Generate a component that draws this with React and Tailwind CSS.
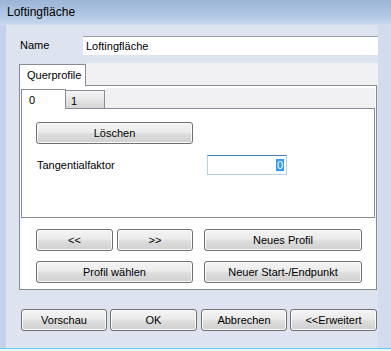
import React from 'react';

const btn =
  'flex items-center justify-center h-[22px] rounded-[3px] border border-[#707070] bg-[linear-gradient(to_bottom,#f4f4f4_0%,#ebebeb_45%,#dddddd_55%,#d0d0d0_100%)] shadow-[inset_0_0_0_1px_#fbfbfb] text-[11px] text-black';

function Btn({ w, className = '', children }) {
  return <div className={`${btn} ${w} ${className}`}>{children}</div>;
}

export default function App() {
  return (
    <div className="w-[391px] h-[351px] bg-[#eef4fa] overflow-hidden font-['Liberation_Sans',Arial,sans-serif] text-black">
      {/* title bar */}
      <div className="h-[25px] flex items-center pl-[7px] text-[12px] bg-[linear-gradient(to_bottom,#9cb4d6,#b4cae6_70%,#c4d7ee)] border-b border-[#cfdcef]">
        Loftingfläche
      </div>

      <div className="flex h-[323px]">
        <div className="w-[6px] bg-[#c4d2ea]" />
        <div className="w-[372px] bg-[#dde3ef] flex flex-col">
          {/* name row */}
          <div className="flex items-center pt-[11px] pl-[14px]">
            <div className="w-[63px] text-[11px]">Name</div>
            <div className="w-[295px] h-[19px] bg-white border-t border-[#9c9ca8] flex items-center pl-[3px] text-[11px]">
              Loftingfläche
            </div>
          </div>

          {/* outer tab control */}
          <div className="ml-[11px] w-[361px] mt-[8px]">
            <div className="flex items-end h-[22px]">
              <div className="w-[2px]" />
              <div className="relative z-10 -mb-px w-[67px] h-[22px] bg-white border-l border-t border-r border-[#898c95] flex items-center pl-[7px] text-[11px]">
                Querprofile
              </div>
              <div className="flex-1 h-[22px] bg-[#f1f1f4]" />
            </div>
            <div className="ml-[2px] w-[358px] h-[205px] bg-white border border-[#898c95]">
              {/* inner tab control */}
              <div className="ml-px w-[354px] pt-[2px]">
                <div className="flex items-end h-[20px]">
                  <div className="relative z-10 -mb-px w-[45px] h-[20px] bg-white border-l border-t border-r border-[#898c95] pl-[7px] pt-[2px] text-[11px]">
                    0
                  </div>
                  <div className="w-[39px] h-[18px] border-t border-r border-[#898c95] bg-[linear-gradient(to_bottom,#f6f6f6,#e6e6e6_50%,#d4d4d4)] pl-[5px] pt-[2px] text-[11px]">
                    1
                  </div>
                  <div className="flex-1 h-[20px] bg-[#f1f1f4]" />
                </div>
                <div className="h-[110px] bg-white border border-[#898c95]">
                  <Btn w="w-[157px]" className="ml-[14px] mt-[13px] h-[21px]">Löschen</Btn>
                  <div className="flex items-center mt-[11px]">
                    <div className="ml-[15px] w-[170px] text-[11px]">Tangentialfaktor</div>
                    <div className="w-[80px] h-[20px] bg-white border border-[#b6d0e8] border-t-[#3d7cb0] flex items-center justify-end pr-[2px]">
                      <span className="bg-[#3399ff] text-white text-[11px] leading-[12px] px-[1px]">0</span>
                    </div>
                  </div>
                </div>
              </div>

              {/* action buttons */}
              <div className="ml-[16px] mt-[11px] flex">
                <Btn w="w-[77px]">&lt;&lt;</Btn>
                <Btn w="w-[76px]" className="ml-[4px]">&gt;&gt;</Btn>
                <Btn w="w-[158px]" className="ml-[11px]">Neues Profil</Btn>
              </div>
              <div className="ml-[16px] mt-[10px] flex">
                <Btn w="w-[157px]">Profil wählen</Btn>
                <Btn w="w-[158px]" className="ml-[11px]">Neuer Start-/Endpunkt</Btn>
              </div>
            </div>
          </div>

          {/* dialog buttons */}
          <div className="flex ml-[15px] mt-[19px]">
            <Btn w="w-[86px]">Vorschau</Btn>
            <Btn w="w-[87px]" className="ml-[3px]">OK</Btn>
            <Btn w="w-[86px]" className="ml-[4px]">Abbrechen</Btn>
            <Btn w="w-[87px]" className="ml-[3px]">&lt;&lt;Erweitert</Btn>
          </div>
        </div>
        <div className="w-[13px] bg-[#d3dcee]" />
      </div>
      <div className="h-px bg-[#5ccff0]" />
    </div>
  );
}
